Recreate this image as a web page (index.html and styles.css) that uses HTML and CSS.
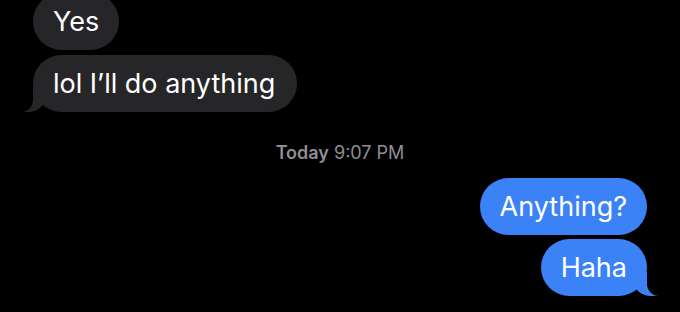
FILE: index.html
```html
<!DOCTYPE html>
<html>
<head>
<meta charset="utf-8">
<link rel="stylesheet" href="styles.css">
</head>
<body>
<div class="thread">
  <div class="row left"><div class="bubble gray">Yes</div></div>
  <div class="row left"><div class="bubble gray tail-left">lol I’ll do anything</div></div>
  <div class="stamp"><b>Today</b> 9:07 PM</div>
  <div class="row right"><div class="bubble blue">Anything?</div></div>
  <div class="row right"><div class="bubble blue tail-right">Haha</div></div>
</div>
</body>
</html>
```
FILE: styles.css
```css
html, body {
  margin: 0;
  padding: 0;
  background: #000;
  height: 100%;
  overflow: hidden;
}
.thread {
  display: flex;
  flex-direction: column;
  margin-top: -7px;
  padding: 0 33px 0 33px;
  font-family: Inter, "Noto Sans", sans-serif;
}
.row {
  display: flex;
}
.row + .row {
  margin-top: 5px;
}
.row.left { justify-content: flex-start; }
.row.right { justify-content: flex-end; }
.row.right + .row.right { margin-top: 4px; }
.bubble {
  position: relative;
  font-size: 27px;
  line-height: 31px;
  padding: 13px 20px;
  border-radius: 29px;
  color: #fff;
}
.gray { background: #262629; }
.blue { background: #3b82f6; }
.tail-left { padding-right: 22px; }
.tail-left::before {
  content: "";
  position: absolute;
  bottom: 0;
  left: -11px;
  width: 24px;
  height: 24px;
  background: #262629;
  border-bottom-right-radius: 18px 16px;
}
.tail-left::after {
  content: "";
  position: absolute;
  bottom: 0;
  left: -30px;
  width: 30px;
  height: 24px;
  background: #000;
  border-bottom-right-radius: 12px;
}
.tail-right::before {
  content: "";
  position: absolute;
  bottom: 0;
  right: -10px;
  width: 24px;
  height: 24px;
  background: #3b82f6;
  border-bottom-left-radius: 18px 16px;
}
.tail-right::after {
  content: "";
  position: absolute;
  bottom: 0;
  right: -30px;
  width: 30px;
  height: 24px;
  background: #000;
  border-bottom-left-radius: 12px;
}
.stamp {
  margin: 30px 0 14px;
  text-align: center;
  font-size: 18px;
  line-height: 22px;
  color: #8e8e93;
  padding-left: 0;
}
.stamp b {
  font-weight: 600;
}
```
